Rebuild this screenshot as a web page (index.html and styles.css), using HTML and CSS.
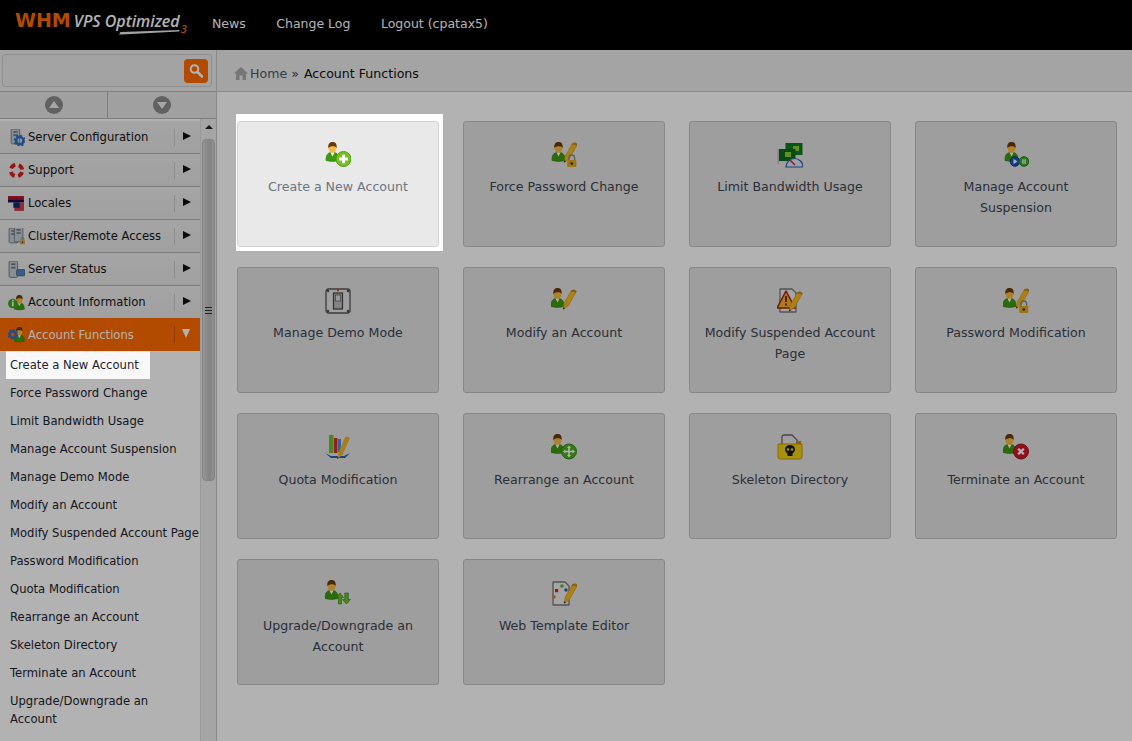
FILE: index.html
```html
<!DOCTYPE html>
<html lang="en">
<head>
    <meta charset="UTF-8">
    <meta name="viewport" content="width=device-width, initial-scale=1.0">
    <title>WHM - Account Functions</title>
    <link rel="stylesheet" href="styles.css">
</head>
<body>
    <!-- shared icon parts -->
    <svg class="defs">
        <defs>
            <g id="person">
                <path d="M0 18.500C-.3 13 2 11 4.500 10.500L6.500 13L8.500 10.500C11 11 13.300 13 13 18.500Q6.500 20.500 0 18.500Z" fill="#3f9a12" stroke="#2a7a0a" stroke-width=".6"/>
                <path d="M4.500 10.500L6.500 14.500L8.500 10.500Z" fill="#fff"/>
                <ellipse cx="6.500" cy="6" rx="4" ry="4.900" fill="#f6bc40"/>
                <path d="M2.300 6C1.900 1 4.300 0 6.500 0C9.300 0 11 1.500 10.700 6C9.500 3.500 4.500 3.500 2.300 6Z" fill="#6a3a0c"/>
            </g>
            <g id="pencil">
                <path d="M12 21.500L13.200 15L20.500 2.300Q23.500 .8 25.500 3.300L17.500 17.500Z" fill="#f6b820" stroke="#c48a10" stroke-width=".5"/>
                <path d="M20.500 2.300Q23.500 .8 25.500 3.300L24.500 5Q22.500 3.400 19.600 4Z" fill="#c98a14"/>
                <path d="M12 21.500L12.500 19.300L14 20.200Z" fill="#222"/>
            </g>
            <g id="lock">
                <path d="M17 17V14.500A3.200 3.200 0 0 1 23.400 14.500V17" fill="none" stroke="#8a8a8a" stroke-width="1.600"/>
                <rect x="15" y="17" width="10.400" height="8" rx="1" fill="#e0a820"/>
                <circle cx="20.200" cy="21" r="1.500" fill="#4a3000"/>
            </g>
            <g id="paper">
                <path d="M2 1H14L18 5V24H2Z" fill="#ececec" stroke="#777" stroke-width="1.300" stroke-linejoin="round"/>
            </g>
            <g id="server">
                <rect x="3" y="0" width="8" height="14" rx="1" fill="#c4ccd4" stroke="#6d7680" stroke-width=".8"/>
                <rect x="5" y="2" width="4" height="1.500" fill="#6d7680"/>
                <rect x="5" y="5" width="4" height="1.500" fill="#6d7680"/>
            </g>
            <g id="gear">
                <circle cx="0" cy="0" r="3.400" fill="none" stroke="#2f6fc4" stroke-width="2.400"/>
                <circle cx="0" cy="0" r="5" fill="none" stroke="#2f6fc4" stroke-width="1.400" stroke-dasharray="2 1.900"/>
            </g>
        </defs>
    </svg>

    <header class="topbar">
        <div class="logo">
            <span class="logo-whm">WHM</span>
            <span class="logo-vps">VPS Optimized</span>
            <span class="logo-ver">3</span>
            <svg class="logo-swoosh" width="62" height="5" viewBox="0 0 62 5"><path d="M0 4.500L1.500 2L61 0L60 1.400L3 4.500Z" fill="#e8e8e8"/></svg>
        </div>
        <nav class="topnav">
            <a href="#">News</a>
            <a href="#">Change Log</a>
            <a href="#">Logout (cpatax5)</a>
        </nav>
    </header>

    <div class="layout">
        <aside class="sidebar">
            <div class="search">
                <div class="search-box">
                    <button class="search-btn" type="button">
                        <svg width="16" height="16" viewBox="0 0 16 16"><circle cx="6.500" cy="6" r="3.800" fill="none" stroke="#fff" stroke-width="2"/><path d="M9.500 9L14 13.500" stroke="#fff" stroke-width="2.600" stroke-linecap="round"/></svg>
                    </button>
                </div>
            </div>
            <div class="jump">
                <div class="jump-cell"><span class="jump-up"></span></div>
                <div class="jump-cell"><span class="jump-down"></span></div>
            </div>
            <div class="side-body">
                <ul class="menu">
                    <li class="menu-head">
                        <svg class="menu-icon" viewBox="0 0 16 16"><use href="#server"/><use href="#gear" transform="translate(11 11)"/></svg>
                        <span class="menu-label">Server Configuration</span><span class="menu-arrow"></span>
                    </li>
                    <li class="menu-head">
                        <svg class="menu-icon" viewBox="0 0 16 16"><circle cx="8" cy="8" r="5.400" fill="none" stroke="#e8e8e8" stroke-width="3.600"/><circle cx="8" cy="8" r="5.400" fill="none" stroke="#d81e1e" stroke-width="3.600" stroke-dasharray="5 3.500" stroke-dashoffset="-1.600"/></svg>
                        <span class="menu-label">Support</span><span class="menu-arrow"></span>
                    </li>
                    <li class="menu-head">
                        <svg class="menu-icon" viewBox="0 0 16 16"><rect x="0" y="1" width="15" height="3" fill="#b01030"/><rect x="0" y="4" width="15" height="3" fill="#101050"/><rect x="6" y="7" width="9" height="8" fill="#c84050"/><rect x="5" y="7" width="6" height="5" fill="#102a70"/></svg>
                        <span class="menu-label">Locales</span><span class="menu-arrow"></span>
                    </li>
                    <li class="menu-head">
                        <svg class="menu-icon" viewBox="0 0 16 16"><use href="#server" transform="translate(-2 0)"/><use href="#server" transform="translate(3 -1)"/><use href="#lock" transform="translate(4.500 4) scale(.45)"/></svg>
                        <span class="menu-label">Cluster/Remote Access</span><span class="menu-arrow"></span>
                    </li>
                    <li class="menu-head">
                        <svg class="menu-icon" viewBox="0 0 16 16"><use href="#server" transform="translate(-2 0) scale(1 1.100)"/><rect x="8" y="8" width="8" height="6" rx="1" fill="#4f86c8" stroke="#506070" stroke-width=".7"/></svg>
                        <span class="menu-label">Server Status</span><span class="menu-arrow"></span>
                    </li>
                    <li class="menu-head">
                        <svg class="menu-icon" viewBox="0 0 16 16"><use href="#person" transform="translate(6 1) scale(.72)"/><circle cx="4.500" cy="9" r="4.500" fill="#3fa81c"/><rect x="3.800" y="7.600" width="1.500" height="4" fill="#fff"/><rect x="3.800" y="5.600" width="1.500" height="1.400" fill="#fff"/></svg>
                        <span class="menu-label">Account Information</span><span class="menu-arrow"></span>
                    </li>
                    <li class="menu-head active">
                        <svg class="menu-icon" viewBox="0 0 16 16"><use href="#person" transform="translate(6 1) scale(.72)"/><use href="#gear" transform="translate(4.500 8) scale(.9)"/></svg>
                        <span class="menu-label">Account Functions</span><span class="menu-arrow"></span>
                    </li>
                    <li class="menu-sub lit"><a href="#">Create a New Account</a></li>
                    <li class="menu-sub"><a href="#">Force Password Change</a></li>
                    <li class="menu-sub"><a href="#">Limit Bandwidth Usage</a></li>
                    <li class="menu-sub"><a href="#">Manage Account Suspension</a></li>
                    <li class="menu-sub"><a href="#">Manage Demo Mode</a></li>
                    <li class="menu-sub"><a href="#">Modify an Account</a></li>
                    <li class="menu-sub"><a href="#">Modify Suspended Account Page</a></li>
                    <li class="menu-sub"><a href="#">Password Modification</a></li>
                    <li class="menu-sub"><a href="#">Quota Modification</a></li>
                    <li class="menu-sub"><a href="#">Rearrange an Account</a></li>
                    <li class="menu-sub"><a href="#">Skeleton Directory</a></li>
                    <li class="menu-sub"><a href="#">Terminate an Account</a></li>
                    <li class="menu-sub"><a href="#">Upgrade/Downgrade an Account</a></li>
                </ul>
                <div class="scrollbar">
                    <span class="scroll-up"></span>
                    <div class="scroll-thumb"><span class="scroll-grip"></span></div>
                </div>
            </div>
        </aside>

        <main class="content">
            <div class="breadcrumb">
                <svg class="home-icon" width="14" height="13" viewBox="0 0 14 13"><path d="M7 0L14 6.500H12V13H8.500V8.500H5.500V13H2V6.500H0Z" fill="#aaa"/></svg>
                <a href="#" class="crumb-home">Home</a>
                <span class="crumb-sep">»</span>
                <span class="crumb-current">Account Functions</span>
            </div>
            <div class="cards">
                <div class="card-frame">
                    <a href="#" class="card lit">
                        <svg class="card-icon" viewBox="0 0 26 26"><use href="#person" transform="translate(1 0)"/><circle cx="18.500" cy="17" r="7.500" fill="#78c020" stroke="#4f9a10"/><path d="M17 12.700h3v2.800h2.800v3H20v2.800h-3v-2.800h-2.800v-3H17Z" fill="#fff"/></svg>
                        <span>Create a New Account</span>
                    </a>
                </div>
                <a href="#" class="card">
                    <svg class="card-icon" viewBox="0 0 26 26"><use href="#person" transform="translate(1 0)"/><use href="#pencil" transform="translate(1 -1)"/><use href="#lock" transform="translate(3 3) scale(.88)"/></svg>
                    <span>Force Password Change</span>
                </a>
                <a href="#" class="card">
                    <svg class="card-icon" viewBox="0 0 26 26"><rect x="8.500" y="1" width="17" height="12" fill="#0e7a20"/><rect x="16" y="4" width="6" height="5" fill="#8ed02a"/><rect x="1.500" y="7" width="17" height="12" fill="#0c6a1c"/><rect x="8" y="10" width="6" height="5" fill="#8ed02a"/><rect x=".5" y="7" width="1.500" height="15" fill="#bbb"/><path d="M9 25A8.500 8.500 0 0 1 26 25Z" fill="#d8e8fa" stroke="#2a5fa8" stroke-width="1.200"/><path d="M13 18L18 23" stroke="#d02020" stroke-width="1.500"/></svg>
                    <span>Limit Bandwidth Usage</span>
                </a>
                <a href="#" class="card">
                    <svg class="card-icon" viewBox="0 0 26 26"><use href="#person" transform="translate(2 0)"/><circle cx="12" cy="19.500" r="4.800" fill="#1858c0" stroke="#0e3a8a"/><path d="M10.500 17V22L14.500 19.500Z" fill="#fff"/><circle cx="21" cy="19.500" r="4.800" fill="#3cae28" stroke="#1f8018"/><path d="M19.300 17.300h1.300v4.400h-1.300ZM21.400 17.300h1.300v4.400h-1.300Z" fill="#fff"/></svg>
                    <span>Manage Account Suspension</span>
                </a>

                <a href="#" class="card">
                    <svg class="card-icon" viewBox="0 0 26 26"><rect x="1" y="1" width="24" height="24" rx="2.500" fill="#e4e4e4" stroke="#555" stroke-width="1.300"/><rect x="8.500" y="5" width="9" height="16" fill="#bbb" stroke="#444" stroke-width="1.200"/><rect x="10.500" y="7" width="5" height="6" fill="#ddd" stroke="#666" stroke-width=".8"/><circle cx="3" cy="3" r="1.300" fill="#555"/><circle cx="23" cy="3" r="1.300" fill="#555"/><circle cx="3" cy="23" r="1.300" fill="#555"/><circle cx="23" cy="23" r="1.300" fill="#555"/><circle cx="13" cy="2.500" r=".9" fill="#e02020"/></svg>
                    <span>Manage Demo Mode</span>
                </a>
                <a href="#" class="card">
                    <svg class="card-icon" viewBox="0 0 26 26"><use href="#person"/><use href="#pencil"/></svg>
                    <span>Modify an Account</span>
                </a>
                <a href="#" class="card">
                    <svg class="card-icon" viewBox="0 0 26 26"><use href="#paper" transform="translate(1 0)"/><path d="M9 3L18 20H0Z" fill="#f2b428" stroke="#a02010" stroke-width="1.500" stroke-linejoin="round"/><rect x="8" y="8" width="2" height="6" fill="#a02010"/><rect x="8" y="15.500" width="2" height="2" fill="#a02010"/><use href="#pencil" transform="translate(0 2)"/></svg>
                    <span>Modify Suspended Account Page</span>
                </a>
                <a href="#" class="card">
                    <svg class="card-icon" viewBox="0 0 26 26"><use href="#person"/><use href="#pencil" transform="translate(1 -1)"/><use href="#lock" transform="translate(3 3) scale(.88)"/></svg>
                    <span>Password Modification</span>
                </a>

                <a href="#" class="card">
                    <svg class="card-icon" viewBox="0 0 26 26"><path d="M0 19L6 24H20L25 19L19 22H6Z" fill="#2060c0"/><rect x="4" y="1" width="4.500" height="18" fill="#6cc030"/><rect x="9" y="4" width="3.500" height="15" fill="#d82828"/><rect x="13" y="5" width="3" height="13" fill="#4a90d8"/><path d="M12 25L13.400 19L20 3Q23 1.500 25 4L17.500 21Z" fill="#f2b428"/><path d="M12 25L12.500 23L14 23.800Z" fill="#222"/></svg>
                    <span>Quota Modification</span>
                </a>
                <a href="#" class="card">
                    <svg class="card-icon" viewBox="0 0 26 26"><use href="#person"/><circle cx="18" cy="17.500" r="7.500" fill="#4eae20" stroke="#2f8a10"/><path d="M18 11.500L20 14H18.800V16.700H21.500V15.500L24 17.500L21.500 19.500V18.300H18.800V21H20L18 23.500L16 21H17.200V18.300H14.500V19.500L12 17.500L14.500 15.500V16.700H17.200V14H16Z" fill="#fff"/></svg>
                    <span>Rearrange an Account</span>
                </a>
                <a href="#" class="card">
                    <svg class="card-icon" viewBox="0 0 26 26"><path d="M5 14V3Q5 1 7.500 1H15L20 6V14Z" fill="#e4e4e4" stroke="#666" stroke-width="1.300"/><path d="M20 7H24V12H20Z" fill="#e87820"/><path d="M1 10H25V23Q25 25 23 25H3Q1 25 1 23Z" fill="#f0d010" stroke="#b89a08"/><ellipse cx="13" cy="15.500" rx="5" ry="4.500" fill="#1a1a1a"/><rect x="10.500" y="19" width="5" height="3" fill="#1a1a1a"/><circle cx="11" cy="15.500" r="1.300" fill="#f0d010"/><circle cx="15" cy="15.500" r="1.300" fill="#f0d010"/></svg>
                    <span>Skeleton Directory</span>
                </a>
                <a href="#" class="card">
                    <svg class="card-icon" viewBox="0 0 26 26"><use href="#person"/><circle cx="18" cy="17.500" r="7.500" fill="#d01828" stroke="#a01018"/><path d="M15.200 14.700L20.800 20.300M20.800 14.700L15.200 20.300" stroke="#fff" stroke-width="2.300"/></svg>
                    <span>Terminate an Account</span>
                </a>

                <a href="#" class="card">
                    <svg class="card-icon" viewBox="0 0 26 26"><use href="#person"/><path d="M15 13L18.500 17.500H16.500V24H13.500V17.500H11.500Z" fill="#6cc030" stroke="#2f8a10" stroke-width=".7"/><path d="M21.500 24L25.500 19.500H23.300V13H19.800V19.500H17.500Z" fill="#6cc030" stroke="#2f8a10" stroke-width=".7"/></svg>
                    <span>Upgrade/Downgrade an Account</span>
                </a>
                <a href="#" class="card">
                    <svg class="card-icon" viewBox="0 0 26 26"><use href="#paper" transform="translate(0 1)"/><rect x="4" y="9" width="3.200" height="3.200" fill="#d82020"/><circle cx="11" cy="6" r="1.800" fill="#60b830"/><circle cx="3" cy="17" r="1.700" fill="#e87820"/><circle cx="15" cy="10" r="1.700" fill="#3060c0"/><use href="#pencil" transform="translate(1 2)"/></svg>
                    <span>Web Template Editor</span>
                </a>
            </div>
        </main>
    </div>

    <div class="overlay"></div>
</body>
</html>
```

FILE: styles.css
```css
* {
    box-sizing: border-box;
}
html, body {
    height: 741px;
    overflow: hidden;
}
body {
    margin: 0;
    font-family: "DejaVu Sans", sans-serif;
    font-size: 11.6px;
    background: #fff;
    color: #1c2430;
}
a {
    color: inherit;
    text-decoration: none;
}
.defs {
    display: none;
}

/* dim layer over the whole page, lit items sit above it */
.overlay {
    position: fixed;
    top: 0;
    left: 0;
    right: 0;
    bottom: 0;
    background: rgba(0, 0, 0, 0.3);
    z-index: 10;
}

/* top bar */
.topbar {
    display: flex;
    align-items: center;
    height: 50px;
    padding-bottom: 3px;
    background: #000;
}
.logo {
    position: relative;
    display: flex;
    align-items: baseline;
    width: 212px;
    height: 47px;
    padding: 9px 0 0 15px;
    white-space: nowrap;
}
.logo-whm {
    font-size: 19px;
    font-weight: bold;
    color: #ff6a00;
}
.logo-vps {
    margin-left: 3px;
    font-family: "Open Sans", sans-serif;
    font-size: 16px;
    font-weight: 600;
    font-style: italic;
    color: #fff;
}
.logo-ver {
    margin-left: 1px;
    position: relative;
    top: 6px;
    font-family: "Open Sans", sans-serif;
    font-size: 11px;
    font-weight: 600;
    font-style: italic;
    color: #ff6a00;
}
.logo-swoosh {
    position: absolute;
    left: 119px;
    top: 30px;
}
.topnav {
    display: flex;
    gap: 30.5px;
    font-size: 12.5px;
    color: #fff;
}

/* page columns */
.layout {
    display: flex;
    height: 691px;
}
.sidebar {
    width: 217px;
    flex: none;
    display: flex;
    flex-direction: column;
    border-right: 1px solid #c8c8c8;
}
.search {
    height: 42px;
    padding: 4px 4px 0 2px;
    background: #ebebeb;
    border-bottom: 1px solid #bbb;
}
.search-box {
    display: flex;
    justify-content: flex-end;
    align-items: center;
    height: 33px;
    padding-right: 3px;
    background: #eaeaea;
    border: 1px solid #cfcfcf;
    border-radius: 3px;
}
.search-btn {
    display: flex;
    align-items: center;
    justify-content: center;
    width: 24px;
    height: 24px;
    padding: 0;
    border: 0;
    border-radius: 4px;
    background: #ff6a00;
}
.jump {
    display: flex;
    height: 27px;
    background: #e6e6e6;
    border-bottom: 1px solid #b4b4b4;
}
.jump-cell {
    flex: 1;
    display: flex;
    align-items: center;
    justify-content: center;
}
.jump-cell:first-child {
    flex: none;
    width: 108px;
    border-right: 1px solid #b4b4b4;
}
.jump-up, .jump-down {
    display: block;
    width: 18px;
    height: 18px;
    border-radius: 50%;
    background: #8c8c8c;
    position: relative;
}
.jump-up::after, .jump-down::after {
    content: "";
    position: absolute;
    left: 4px;
    border-left: 5px solid transparent;
    border-right: 5px solid transparent;
}
.jump-up::after {
    top: 5px;
    border-bottom: 7px solid #eee;
}
.jump-down::after {
    top: 6px;
    border-top: 7px solid #eee;
}
.side-body {
    flex: 1;
    display: flex;
    min-height: 0;
}

/* left menu */
.menu {
    width: 200px;
    flex: none;
    list-style: none;
    margin: 0;
    padding: 2px 0 0;
    overflow: hidden;
}
.menu-head {
    display: flex;
    align-items: center;
    height: 33px;
    padding-left: 8px;
    background: linear-gradient(#ececec, #e6e6e6);
    border-bottom: 1px solid #b0b0b0;
    color: #141414;
}
.menu-icon {
    width: 17px;
    height: 17px;
    flex: none;
    margin-right: 3px;
}
.menu-label {
    flex: 1;
    white-space: nowrap;
}
.menu-arrow {
    display: block;
    position: relative;
    width: 26px;
    height: 17px;
    border-left: 1px solid #cacaca;
}
.menu-arrow::after {
    content: "";
    position: absolute;
    left: 8px;
    top: 3px;
    border-top: 4.5px solid transparent;
    border-bottom: 4.5px solid transparent;
    border-left: 8px solid #111;
}
.menu-head.active {
    margin-top: -1px;
    background: #ff6a00;
    border-bottom: 0;
    color: #fff;
}
.menu-head.active .menu-arrow {
    border-left-color: #c85400;
}
.menu-head.active .menu-arrow::after {
    left: 7px;
    top: 3px;
    border-top: 9px solid #fff;
    border-bottom: 0;
    border-left: 4.5px solid transparent;
    border-right: 4.5px solid transparent;
}
.menu-sub {
    padding: 7px 0 7px 10px;
    line-height: 14px;
    white-space: nowrap;
}
.menu-sub:last-child {
    white-space: normal;
    width: 170px;
    line-height: 18px;
    padding-top: 5px;
}
.menu-sub.lit {
    position: relative;
    z-index: 11;
    width: 144px;
    margin-left: 6px;
    padding-left: 4px;
    background: #f8f8f8;
    border-top: 1px solid #ffd9a8;
    padding-top: 6px;
}

/* fake scrollbar */
.scrollbar {
    width: 16px;
    flex: none;
    background: #ededed;
    border-left: 1px solid #dcdcdc;
    padding: 0 1px;
}
.scroll-up {
    display: block;
    margin: 6px auto 0;
    width: 0;
    border-left: 4px solid transparent;
    border-right: 4px solid transparent;
    border-bottom: 4px solid #222;
}
.scroll-thumb {
    display: flex;
    align-items: center;
    justify-content: center;
    height: 342px;
    margin-top: 10px;
    border: 1px solid #bbb;
    border-radius: 4px;
    background: linear-gradient(90deg, #d6d6d6, #bcbcbc 60%, #cfcfcf);
}
.scroll-grip {
    display: block;
    width: 7px;
    height: 7px;
    border-top: 1px solid #333;
    border-bottom: 1px solid #333;
    background: linear-gradient(#333, #333) center / 100% 1px no-repeat;
}

/* main area */
.content {
    flex: 1;
    min-width: 0;
    background: #fff;
}
.breadcrumb {
    display: flex;
    align-items: center;
    height: 42px;
    padding: 6px 0 0 17px;
    font-size: 12.6px;
    background: #ebebeb;
    border-bottom: 1px solid #c6c6c6;
}
.home-icon {
    margin-right: 2px;
}
.crumb-home {
    color: #4c5866;
}
.crumb-sep {
    margin: 0 5px 0 4px;
    color: #3c4654;
}
.crumb-current {
    color: #111;
}
.cards {
    display: grid;
    grid-template-columns: repeat(4, 202px);
    grid-auto-rows: 126px;
    gap: 20px 24px;
    padding: 29px 0 0 20px;
}
.card {
    display: flex;
    flex-direction: column;
    align-items: center;
    height: 126px;
    padding: 20px 10px 0;
    text-align: center;
    font-size: 12.6px;
    line-height: 21px;
    color: #3c4552;
    background: #e3e3e3;
    border: 1px solid #c2c2c2;
    border-radius: 3px;
}
.card-icon {
    width: 26px;
    height: 26px;
    flex: none;
    margin-bottom: 8px;
}
/* lower two rows sit a pixel further from the icon */
.card:nth-child(n+9) .card-icon {
    margin-bottom: 9px;
}
.card-frame {
    position: relative;
    z-index: 11;
    margin: -7px -4px -4px -1px;
    padding: 7px 4px 4px 1px;
    background: #fff;
}
.card.lit {
    background: #e9e9e9;
    border-color: #d4d4d4;
    color: #6c7582;
}
```
